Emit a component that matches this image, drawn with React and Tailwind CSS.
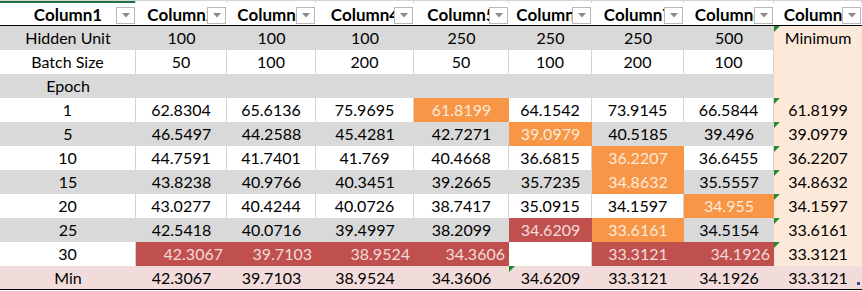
import React from "react";

const W = "bg-white";
const G = "bg-[#d9d9d9]";
const O = "bg-[#f79646] text-[#fde9d9]";
const R = "bg-[#c0504d] text-[#f2dcdb]";
const P = "bg-[#fde9d9]";
const M = "bg-[#f2dcdb]";

const rows = [
  { label: "Hidden Unit", bg: G, cells: ["100", "100", "100", "250", "250", "250", "500"], last: "Minimum", lastTri: true },
  { label: "Batch Size", bg: W, cells: ["50", "100", "200", "50", "100", "200", "100"], last: "" },
  { label: "Epoch", bg: G, cells: ["", "", "", "", "", "", ""], last: "" },
  { label: "1", bg: W, cells: ["62.8304", "65.6136", "75.9695", ["61.8199", O], "64.1542", "73.9145", "66.5844"], last: "61.8199", lastTri: true },
  { label: "5", bg: G, cells: ["46.5497", "44.2588", "45.4281", "42.7271", ["39.0979", O], "40.5185", "39.496"], last: "39.0979", lastTri: true },
  { label: "10", bg: W, cells: ["44.7591", "41.7401", "41.769", "40.4668", "36.6815", ["36.2207", O], "36.6455"], last: "36.2207", lastTri: true },
  { label: "15", bg: G, cells: ["43.8238", "40.9766", "40.3451", "39.2665", "35.7235", ["34.8632", O], "35.5557"], last: "34.8632", lastTri: true },
  { label: "20", bg: W, cells: ["43.0277", "40.4244", "40.0726", "38.7417", "35.0915", "34.1597", ["34.955", O]], last: "34.1597", lastTri: true },
  { label: "25", bg: G, cells: ["42.5418", "40.0716", "39.4997", "38.2099", ["34.6209", R], ["33.6161", O], "34.5154"], last: "33.6161", lastTri: true },
  { label: "30", bg: W, cells: [["42.3067", R, "r"], ["39.7103", R, "r"], ["38.9524", R, "r"], ["34.3606", R, "r"], "", ["33.3121", R], ["34.1926", R, "r"]], last: "33.3121", lastTri: true },
];

const minRow = ["42.3067", "39.7103", "38.9524", "34.3606", "34.6209", "33.3121", "34.1926"];

function Tri() {
  return (
    <svg className="absolute left-0 top-0" width="6" height="6" viewBox="0 0 6 6">
      <polygon points="0,0 6,0 0,6" fill="#1f8a2e" />
    </svg>
  );
}

function Cell({ text, cls, align, tri, grid }) {
  const isWhite = cls === W;
  return (
    <div
      className={`relative flex items-center h-[24px] ${cls} ${
        align === "r" ? "justify-end pr-[4px]" : "justify-center"
      } ${grid && isWhite ? "border-r border-[#d4d4d4]" : ""}`}
    >
      {tri && <Tri />}
      <span className="whitespace-nowrap">{text}</span>
    </div>
  );
}

function HeaderCell({ text }) {
  return (
    <div className="relative flex items-center justify-center h-[22px] bg-white overflow-hidden">
      <span className="font-bold whitespace-nowrap text-[17px]">{text}</span>
      <div className="absolute right-[1px] top-[4px] w-[19px] h-[17px] bg-white border border-[#b8b8b8] flex items-center justify-center">
        <svg width="8" height="5" viewBox="0 0 8 5">
          <polygon points="0,0 8,0 4,4.5" fill="#8a8a8a" />
        </svg>
      </div>
    </div>
  );
}

export default function App() {
  const cols = "grid grid-cols-[136px_91px_89px_98px_95px_83px_92px_90px_88px]";
  const headers = ["Column1", "Column2", "Column3", "Column4", "Column5", "Column6", "Column7", "Column8", "Column9"];
  return (
    <div
      className="w-[862px] h-[291px] bg-white text-black text-[16px] leading-none overflow-hidden"
      style={{ fontFamily: "Lato, 'Open Sans', sans-serif" }}
    >
      <div className={`${cols} h-[3px] border-t border-[#d4d4d4]`}>
        <div className="bg-[#217346] h-[2px] border-r border-[#d4d4d4]" />
        {headers.slice(1).map((h, i) => (
          <div key={i} className="h-[2px] border-r border-[#d4d4d4]" />
        ))}
      </div>
      <div className={`${cols} border-b border-black`}>
        {headers.map((h) => (
          <HeaderCell key={h} text={h} />
        ))}
      </div>
      {rows.map((row, ri) => (
        <div key={ri} className={cols}>
          <Cell text={row.label} cls={row.bg} grid />
          {row.cells.map((c, ci) => {
            if (Array.isArray(c)) {
              return <Cell key={ci} text={c[0]} cls={c[1]} align={c[2]} />;
            }
            return <Cell key={ci} text={c} cls={row.bg} grid />;
          })}
          <Cell text={row.last} cls={P} tri={row.lastTri} />
        </div>
      ))}
      <div className={`${cols} border-b border-black h-[24px]`}>
        <div className={`flex items-center justify-center h-[23px] ${M}`}>Min</div>
        {minRow.map((v, i) => (
          <div key={i} className={`relative flex items-center justify-center h-[23px] ${M}`}>
            {i === 4 && <Tri />}
            {v}
          </div>
        ))}
        <div className={`relative flex items-center justify-center h-[23px] ${M}`}>
          33.3121
          <div className="absolute right-[2px] bottom-[4px] w-[3px] h-[3px] bg-[#2f4f8f]" />
        </div>
      </div>
    </div>
  );
}
